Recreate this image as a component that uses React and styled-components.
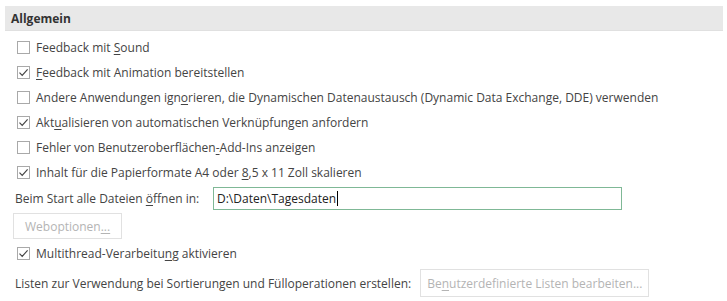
import React from 'react'
import styled, { createGlobalStyle } from 'styled-components'

const GlobalStyle = createGlobalStyle`
  html, body {
    margin: 0;
    padding: 0;
    background: #ffffff;
  }
  body {
    font-family: 'Open Sans', 'Noto Sans', sans-serif;
    font-size: 12px;
    color: #444444;
  }
`

const Page = styled.div`
  width: 727px;
  height: 301px;
  padding: 6px 4px 0 5px;
  box-sizing: border-box;
  overflow: hidden;
`

const SectionHeader = styled.div`
  height: 24px;
  display: flex;
  align-items: center;
  padding-left: 6px;
  background: #e8e8e8;
  border-bottom: 1px solid #e0e0e0;
  font-weight: 700;
  color: #333333;
`

const Body = styled.div`
  display: flex;
  flex-direction: column;
  padding: 4px 0 0 8px;
`

const Row = styled.label`
  display: flex;
  align-items: center;
  height: 25px;
  white-space: nowrap;
`

const Box = styled.span`
  width: 13px;
  height: 13px;
  box-sizing: border-box;
  border: 1px solid #a9a9a9;
  background: #ffffff;
  margin: 0 6px 0 4px;
  display: flex;
  align-items: center;
  justify-content: center;
  flex-shrink: 0;
`

const Key = styled.span`
  text-decoration: underline;
  text-underline-offset: 2px;
`

const FieldRow = styled.div`
  display: flex;
  align-items: center;
  height: 26px;
  white-space: nowrap;
`

const FieldLabel = styled.span`
  margin-left: 2px;
  width: 198px;
`

const TextInput = styled.div`
  width: 409px;
  height: 23px;
  box-sizing: border-box;
  border: 1px solid #7fb896;
  padding-left: 3px;
  display: flex;
  align-items: center;
  color: #222222;
`

const Caret = styled.span`
  display: inline-block;
  width: 1px;
  height: 15px;
  background: #000000;
  margin-left: 1px;
`

const ButtonRow = styled.div`
  display: flex;
  align-items: center;
  height: 30px;
`

const Button = styled.div`
  height: ${p => p.$h || 26}px;
  box-sizing: border-box;
  padding: 0 ${p => p.$px || 10}px;
  border: 1px solid #e1e1e1;
  color: #b4b4b4;
  display: flex;
  align-items: center;
  white-space: nowrap;
  background: #ffffff;
`

const ListRow = styled.div`
  display: flex;
  align-items: center;
  height: 32px;
  margin-top: 1px;
  white-space: nowrap;
`

const ListLabel = styled.span`
  margin-left: 2px;
  margin-right: 9px;
`

const Check = () => (
  <svg width="11" height="11" viewBox="0 0 11 11">
    <path d="M1.5 5.6 L4.2 8.3 L9.6 2.4" fill="none" stroke="#444" strokeWidth="1.2" />
  </svg>
)

const CheckRow = ({ checked, children }) => (
  <Row>
    <Box>{checked && <Check />}</Box>
    <span>{children}</span>
  </Row>
)

export default function App() {
  return (
    <>
      <GlobalStyle />
      <Page>
        <SectionHeader>Allgemein</SectionHeader>
        <Body>
          <CheckRow>Feedback mit <Key>S</Key>ound</CheckRow>
          <CheckRow checked><Key>F</Key>eedback mit Animation bereitstellen</CheckRow>
          <CheckRow>Andere Anwendungen ign<Key>o</Key>rieren, die Dynamischen Datenaustausch (Dynamic Data Exchange, DDE) verwenden</CheckRow>
          <CheckRow checked>Akt<Key>u</Key>alisieren von automatischen Verknüpfungen anfordern</CheckRow>
          <CheckRow>Fehler von Benutzeroberflächen<Key>-</Key>Add-Ins anzeigen</CheckRow>
          <CheckRow checked>Inhalt für die Papierformate A4 oder <Key>8</Key>,5 x 11 Zoll skalieren</CheckRow>
          <FieldRow>
            <FieldLabel>Beim Start alle Dateien <Key>ö</Key>ffnen in:</FieldLabel>
            <TextInput>D:\Daten\Tagesdaten<Caret /></TextInput>
          </FieldRow>
          <ButtonRow>
            <Button $px={11}>Weboptionen<Key>...</Key></Button>
          </ButtonRow>
          <CheckRow checked>Multithread-Verarbeitu<Key>n</Key>g aktivieren</CheckRow>
          <ListRow>
            <ListLabel>Listen zur Verwendung bei Sortierungen und Fülloperationen erstellen:</ListLabel>
            <Button $h={28} $px={6}>Be<Key>n</Key>utzerdefinierte Listen bearbeiten...</Button>
          </ListRow>
        </Body>
      </Page>
    </>
  )
}
